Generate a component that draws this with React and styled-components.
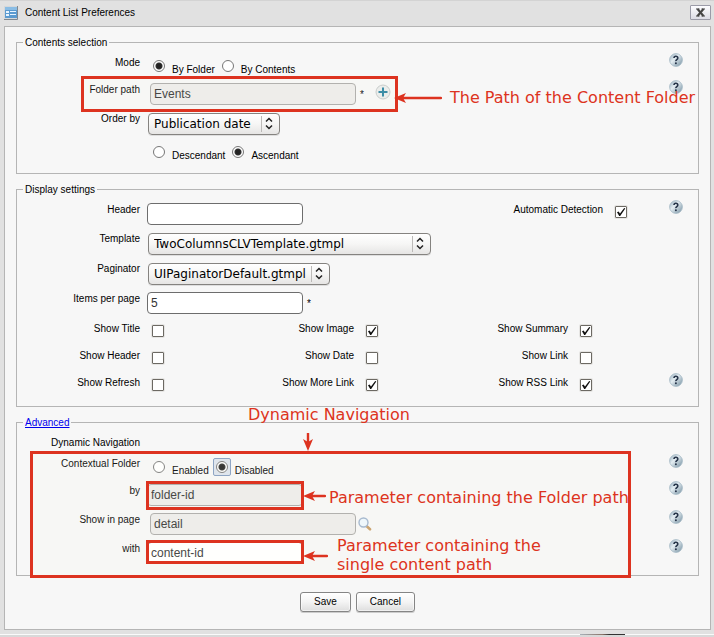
import React from 'react';
import styled, { createGlobalStyle } from 'styled-components';

const RED = '#dd3320';
const UI = '"Liberation Sans", Arial, sans-serif';
const WIDE = '"DejaVu Sans", Verdana, sans-serif';

const GlobalStyle = createGlobalStyle`
  * { box-sizing: border-box; }
  body { margin: 0; background: #e1e1e1; color: #000; font: 10px/12px ${UI}; }
`;

const Window = styled.div`
  position: relative;
  min-height: 100vh;
  padding: 0 3px 0 4px;
  border-top: 1px solid #d3d3d3;
  display: flex;
  flex-direction: column;
`;

const TitleBar = styled.header`
  display: flex;
  align-items: center;
  height: 25px;
  padding-bottom: 2px;
`;

const Title = styled.h1`
  flex: 1;
  margin: 0;
  padding-left: 7px;
  font: 10px/12px ${UI};
`;

const CloseButton = styled.button`
  display: grid;
  place-items: center;
  width: 21px;
  height: 15px;
  padding: 0;
  border: 1px solid #9b9ba8;
  border-radius: 1px;
  background: linear-gradient(#fdfdff, #dcdce6);
`;

const Panel = styled.form`
  padding: 9px 11px 17px;
  border: 1px solid #b5b5b5;
  background: #f7f7f7;
`;

const Group = styled.fieldset`
  min-width: 0;
  margin: 0 0 9px;
  padding: 4px 15px 6px 0;
  border: 1px solid #b5b5b5;
`;

const GroupTitle = styled.legend`
  margin-left: 6px;
  padding: 0 2px;
  line-height: 13px;
`;

const AdvancedLink = styled.a`
  color: #0000ee;
`;

const Row = styled.div`
  display: flex;
  align-items: flex-start;
  min-height: ${(p) => p.$h || 29}px;
`;

const Label = styled.label`
  flex: none;
  width: 123px;
  padding-top: 4px;
  text-align: right;
  white-space: nowrap;
`;

const Field = styled.div`
  flex: 1;
  display: flex;
  align-items: flex-start;
  padding: 3px 0 0 7px;
`;

const TextInput = styled.input`
  width: ${(p) => (p.$browse ? 206 : 156)}px;
  height: 22px;
  margin: 0 0 0 ${(p) => (p.$browse ? 3 : 0)}px;
  padding: 0 3px;
  border: 1px solid ${(p) => (p.readOnly ? '#aaa9a7' : '#6d6d6d')};
  border-radius: 4px;
  outline: none;
  background: ${(p) => (p.readOnly ? '#ecebea' : '#fff')};
  color: #333;
  font: 12px/16px ${UI};
`;

const Required = styled.span`
  padding: 6px 0 0 4px;
`;

const SelectBox = styled.div`
  position: relative;
  width: ${(p) => p.$w}px;
  margin: 1px;

  select {
    appearance: none;
    width: 100%;
    height: 22px;
    padding: 0 20px 0 5px;
    border: 1px solid #858380;
    border-radius: 4px;
    background: linear-gradient(#fff, #f6f6f5 50%, #e6e5e4);
    box-shadow: 0 1px 0 #dedede;
    color: #000;
    font: 12px/18px ${WIDE};
  }

  svg {
    position: absolute;
    top: 3px;
    right: 3px;
    pointer-events: none;
  }
`;

const Radios = styled.div`
  flex: 1;
  display: flex;
  padding: 4px 0 0 10px;
`;

const RadioMark = styled.span`
  display: grid;
  place-items: center;
  width: 18px;
  height: 18px;
  border: 1px solid ${(p) => (p.$focused ? '#829bc0' : 'transparent')};
  border-radius: 2px;
  background: ${(p) => (p.$focused ? '#dce3ed' : 'none')};
`;

const RadioInput = styled.input`
  appearance: none;
  width: 12px;
  height: 12px;
  margin: 0;
  border: 1px solid #777;
  border-radius: 50%;
  background: #fff;

  &:checked {
    background: radial-gradient(circle, #222 0 2px, #333 3px, #fff 4px);
  }
`;

const RadioLabel = styled.label`
  display: flex;
  gap: 4px;
  margin-right: 4px;

  > span:last-child { padding-top: 7px; }
`;

const CheckCells = styled.div`
  display: flex;
  flex: 1;
`;

const CheckCell = styled.div`
  flex: 0 1 214px;
  display: flex;
  gap: 12px;
`;

const Check = styled.input`
  appearance: none;
  flex: none;
  width: 12px;
  height: 12px;
  margin: 6px 0 0;
  border: 1px solid #6c6963;
  border-radius: 1px;
  background: #fff;
  box-shadow: 0 0 0 1px #e6e5e3;

  &:checked {
    background: #fff url("data:image/svg+xml,%3Csvg xmlns='http://www.w3.org/2000/svg' viewBox='0 0 10 10'%3E%3Cpath d='M1 5.2 2.6 4.6 4 6.4 8.2 1 9.3 1.4 4.2 9 3.2 9Z' fill='%23111'/%3E%3C/svg%3E");
  }
`;

const Detection = styled.div`
  display: flex;
  gap: 12px;
  margin-right: 42px;

  label { width: auto; }
`;

const IconButton = styled.button`
  flex: none;
  display: block;
  height: auto;
  margin: ${(p) => p.$m || '0'};
  padding: 0;
  border: 0;
  background: none;
  line-height: 0;
`;

const Actions = styled.div`
  display: flex;
  justify-content: center;
  gap: 5px;
  padding-top: 7px;
`;

const ActionButton = styled.button`
  height: 20px;
  padding: 0 13px;
  border: 1px solid #858585;
  border-radius: 3px;
  background: linear-gradient(#fff, #f4f4f4 50%, #dedede);
  box-shadow: inset 0 0 0 1px #fff8, 0 1px 0 #ccc;
  color: #000;
  font: 10px/16px ${UI};
`;

const BottomEdge = styled.footer`
  flex: 1;
  display: flex;
  justify-content: flex-end;
  min-height: 7px;
  margin: 0 -3px 0 -4px;
  padding: 4px 89px 0 0;
  background: linear-gradient(#e1e1e1 4px, #fafafa 4px 5px, #d9d9d9 5px);

  &::after {
    content: '';
    width: 45px;
    height: 1px;
    background: linear-gradient(90deg, #a8b2ba, #8c7468 50%, #333 65%);
  }
`;

const Frame = styled.div`
  position: absolute;
  left: ${(p) => p.$x}px;
  top: ${(p) => p.$y}px;
  width: ${(p) => p.$w}px;
  height: ${(p) => p.$h}px;
  border: 3px solid ${RED};
  background: ${(p) => (p.$tint ? 'rgba(255, 255, 235, 0.1)' : 'none')};
  pointer-events: none;
`;

const Note = styled.p`
  position: absolute;
  left: ${(p) => p.$x}px;
  top: ${(p) => p.$y}px;
  margin: 0;
  color: ${RED};
  font: 16px/19px ${WIDE};
  white-space: nowrap;
  pointer-events: none;
`;

const ArrowSvg = styled.svg`
  position: absolute;
  left: ${(p) => p.$x}px;
  top: ${(p) => p.$y}px;
  pointer-events: none;
`;

function LeftArrow({ x, y, length }) {
  return (
    <ArrowSvg $x={x} $y={y} width={length} height="12" fill={RED}>
      <path d="M0 6 12 1 9 6 12 11Z" />
      <path d={`M8 6H${length - 1}`} stroke={RED} strokeWidth="2.4" strokeLinecap="round" />
    </ArrowSvg>
  );
}

function Help() {
  return (
    <IconButton type="button" aria-label="Help">
      <svg width="14" height="14" viewBox="0 0 14 14">
        <defs>
          <linearGradient id="ball" x1="0" y1="0" x2="1" y2="1">
            <stop offset="0" stopColor="#8fa9b8" />
            <stop offset=".4" stopColor="#e4edf2" />
            <stop offset="1" stopColor="#6f8b9c" />
          </linearGradient>
        </defs>
        <circle cx="7" cy="7" r="6.4" fill="url(#ball)" stroke="#a3b8c4" strokeWidth=".8" />
        <path d="M5 5Q5 3.2 6.9 3.2T8.8 5Q8.8 5.9 7.8 6.6T6.9 8.2" fill="none" stroke="#263449" strokeWidth="1.6" />
        <circle cx="6.9" cy="10.2" r="1" fill="#263449" />
      </svg>
    </IconButton>
  );
}

function Dropdown({ id, value, width }) {
  return (
    <SelectBox $w={width}>
      <select id={id} defaultValue={value}><option>{value}</option></select>
      <svg width="16" height="16" fill="none">
        <path d="M.5 0V16" stroke="#bcbab8" />
        <path d="M5 5.5 8 2.5 11 5.5M5 9.5 8 12.5 11 9.5" stroke="#222" strokeWidth="1.5" />
      </svg>
    </SelectBox>
  );
}

function Radio({ name, text, checked, focused }) {
  return (
    <RadioLabel>
      <RadioMark $focused={focused}>
        <RadioInput type="radio" name={name} defaultChecked={checked} />
      </RadioMark>
      <span>{text}</span>
    </RadioLabel>
  );
}

function Checks({ items, help }) {
  return (
    <Row $h={27}>
      <CheckCells>
        {items.map(([text, on]) => (
          <CheckCell key={text}>
            <Label htmlFor={text}>{text}</Label>
            <Check id={text} type="checkbox" defaultChecked={on} />
          </CheckCell>
        ))}
      </CheckCells>
      {help && <Help />}
    </Row>
  );
}

export default function App() {
  return (
    <>
      <GlobalStyle />
      <Window>
        <TitleBar>
          <svg width="14" height="14" viewBox="0 0 14 14">
            <path d="M0 0H14V14H0Z" fill="#d5d8da" />
            <path d="M0 13.5H13.5V0" fill="none" stroke="#808890" />
            <path d="M1 1H13V12H1Z" fill="#5b9bd0" />
            <path d="M1 1H13V4H1Z" fill="#8abde5" />
            <path d="M2 5H5V7H2ZM6 5H12V6H6ZM2 8H5V10H2ZM6 8H12V9H6Z" fill="#e7f4ff" />
          </svg>
          <Title>Content List Preferences</Title>
          <CloseButton type="button" aria-label="Close">
            <svg width="9" height="9" viewBox="0 0 9 9" fill="none" stroke="#444">
              <path d="M1.5 1 7.5 8M7.5 1 1.5 8" strokeWidth="2" />
              <path d="M0 1H3.5M5.5 1H9M0 8H3.5M5.5 8H9" />
            </svg>
          </CloseButton>
        </TitleBar>

        <Panel>
          <Group>
            <GroupTitle>Contents selection</GroupTitle>
            <Row $h={27}>
              <Label as="span">Mode</Label>
              <Radios>
                <Radio name="mode" text="By Folder" checked />
                <Radio name="mode" text="By Contents" />
              </Radios>
              <Help />
            </Row>
            <Row>
              <Label htmlFor="path">Folder path</Label>
              <Field>
                <TextInput id="path" $browse readOnly value="Events" />
                <Required>*</Required>
                <IconButton type="button" aria-label="Select folder" $m="1px 0 0 11px">
                  <svg width="16" height="16" viewBox="0 0 16 16">
                    <circle cx="8" cy="8" r="7" fill="#e9ebeb" stroke="#c4c8c8" />
                    <path d="M8 3.5V12.5M3.5 8H12.5" stroke="#26809f" strokeWidth="2" />
                  </svg>
                </IconButton>
              </Field>
              <Help />
            </Row>
            <Row $h={30}>
              <Label htmlFor="order">Order by</Label>
              <Field><Dropdown id="order" value="Publication date" width={132} /></Field>
            </Row>
            <Row $h={28}>
              <Label as="span" />
              <Radios>
                <Radio name="direction" text="Descendant" />
                <Radio name="direction" text="Ascendant" checked />
              </Radios>
            </Row>
          </Group>

          <Group>
            <GroupTitle>Display settings</GroupTitle>
            <Row>
              <Label htmlFor="header">Header</Label>
              <Field><TextInput id="header" /></Field>
              <Detection>
                <Label htmlFor="auto">Automatic Detection</Label>
                <Check id="auto" type="checkbox" defaultChecked />
              </Detection>
              <Help />
            </Row>
            <Row $h={30}>
              <Label htmlFor="template">Template</Label>
              <Field><Dropdown id="template" value="TwoColumnsCLVTemplate.gtmpl" width={283} /></Field>
            </Row>
            <Row $h={30}>
              <Label htmlFor="paginator">Paginator</Label>
              <Field><Dropdown id="paginator" value="UIPaginatorDefault.gtmpl" width={182} /></Field>
            </Row>
            <Row $h={30}>
              <Label htmlFor="items">Items per page</Label>
              <Field>
                <TextInput id="items" defaultValue="5" />
                <Required>*</Required>
              </Field>
            </Row>
            <Checks items={[['Show Title', false], ['Show Image', true], ['Show Summary', true]]} />
            <Checks items={[['Show Header', false], ['Show Date', false], ['Show Link', false]]} />
            <Checks items={[['Show Refresh', false], ['Show More Link', true], ['Show RSS Link', true]]} help />
          </Group>

          <Group>
            <GroupTitle><AdvancedLink href="#advanced">Advanced</AdvancedLink></GroupTitle>
            <Row $h={21}>
              <Label as="span">Dynamic Navigation</Label>
            </Row>
            <Row $h={27}>
              <Label as="span">Contextual Folder</Label>
              <Radios>
                <Radio name="contextual" text="Enabled" />
                <Radio name="contextual" text="Disabled" checked focused />
              </Radios>
              <Help />
            </Row>
            <Row>
              <Label htmlFor="by">by</Label>
              <Field><TextInput id="by" readOnly value="folder-id" /></Field>
              <Help />
            </Row>
            <Row>
              <Label htmlFor="page">Show in page</Label>
              <Field>
                <TextInput id="page" $browse readOnly value="detail" />
                <IconButton type="button" aria-label="Search page" $m="4px 0 0 2px">
                  <svg width="14" height="14" viewBox="0 0 14 14">
                    <path d="M8.5 9 12 12.3" stroke="#c69b64" strokeWidth="2.6" strokeLinecap="round" />
                    <circle cx="5.5" cy="5.5" r="4.5" fill="#eef6fd" stroke="#9db2cc" strokeWidth="1.4" />
                  </svg>
                </IconButton>
              </Field>
              <Help />
            </Row>
            <Row $h={30}>
              <Label htmlFor="with">with</Label>
              <Field><TextInput id="with" defaultValue="content-id" /></Field>
              <Help />
            </Row>
          </Group>

          <Actions>
            <ActionButton type="button">Save</ActionButton>
            <ActionButton type="button">Cancel</ActionButton>
          </Actions>
        </Panel>
        <BottomEdge />

        <Frame $x={81} $y={75} $w={317} $h={36} $tint />
        <Frame $x={30} $y={450} $w={601} $h={127} $tint />
        <Frame $x={146} $y={480} $w={158} $h={29} />
        <Frame $x={146} $y={539} $w={158} $h={24} />
        <Note $x={450} $y={87}>The Path of the Content Folder</Note>
        <Note $x={248} $y={404}>Dynamic Navigation</Note>
        <Note $x={329} $y={487}>Parameter containing the Folder path</Note>
        <Note $x={337} $y={535}>Parameter containing the<br />single content path</Note>
        <LeftArrow x={394} y={91} length={48} />
        <LeftArrow x={303} y={489} length={23} />
        <LeftArrow x={303} y={549} length={25} />
        <ArrowSvg $x={302} $y={431} width="12" height="19" fill={RED}>
          <path d="M6 19 1 7 6 10 11 7Z" />
          <path d="M6 1V11" stroke={RED} strokeWidth="2.4" />
        </ArrowSvg>
      </Window>
    </>
  );
}
